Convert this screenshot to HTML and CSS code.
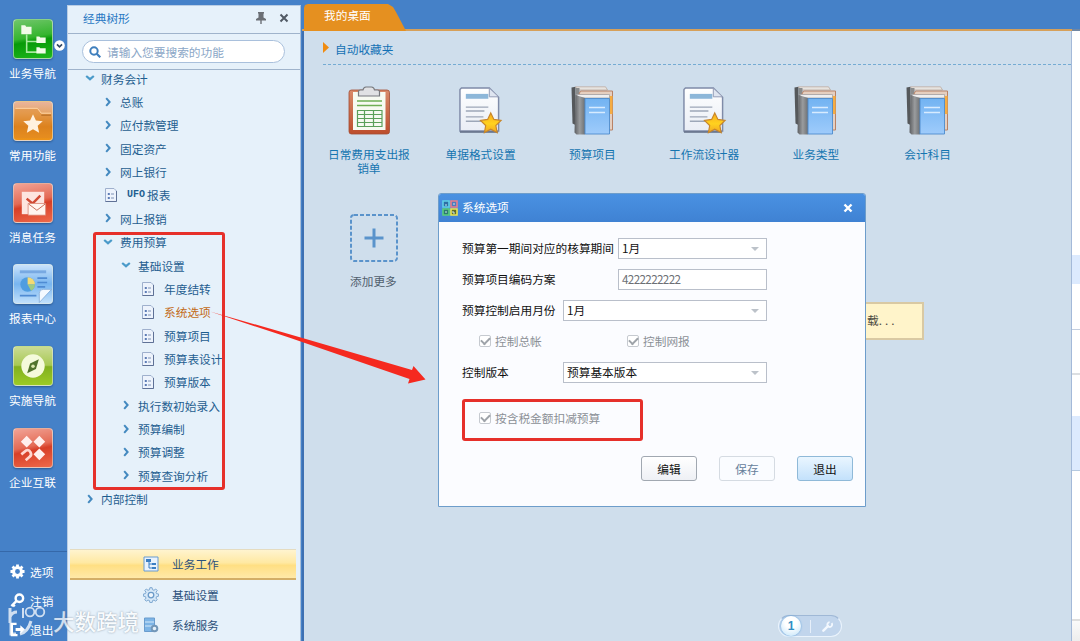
FILE: index.html
```html
<!DOCTYPE html>
<html lang="zh-CN">

<head>
<meta charset="UTF-8">
<meta name="viewport" content="width=device-width, initial-scale=1.0">
<title>我的桌面</title>
<link rel="stylesheet" href="styles.css">
</head>

<body>

<!-- Shared icons -->
<svg class="defs" width="0" height="0">
    <defs>
        <linearGradient id="gStar" x1="0" y1="0" x2="0" y2="1"><stop offset="0" stop-color="#f9ab1c"/><stop offset=".55" stop-color="#ffd21f"/><stop offset="1" stop-color="#f2a722"/></linearGradient>
        <linearGradient id="gPaper" x1="0" y1="0" x2="0" y2="1"><stop offset="0" stop-color="#fff"/><stop offset="1" stop-color="#e9edf5"/></linearGradient>
        <linearGradient id="gBook" x1="0" y1="0" x2="0" y2="1"><stop offset="0" stop-color="#72b3f2"/><stop offset="1" stop-color="#9ecbfb"/></linearGradient>
        <linearGradient id="gSpine" x1="0" y1="0" x2="1" y2="0"><stop offset="0" stop-color="#5d5f62"/><stop offset=".5" stop-color="#9a9c9e"/><stop offset="1" stop-color="#6d7073"/></linearGradient>
        <linearGradient id="gBoard" x1="0" y1="0" x2="0" y2="1"><stop offset="0" stop-color="#d88a6b"/><stop offset="1" stop-color="#bd4d2c"/></linearGradient>
    </defs>
    <symbol id="right" viewBox="0 0 10 10"><path d="M3.2 1.2 6.6 5 3.2 8.8" fill="none" stroke="#4389bf" stroke-width="2"/></symbol>
    <symbol id="down" viewBox="0 0 10 10"><path d="M1.2 3 5 6.2 8.8 3" fill="none" stroke="#4a9ac9" stroke-width="2.2"/></symbol>
    <symbol id="leaf" viewBox="0 0 12 14">
        <path d="M.5.5H9L11.5 3V13.500H.5Z" fill="#edf3fc" stroke="#9fb0cd"/>
        <path d="M11.500 3V13.500H.5" fill="none" stroke="#5f7196"/>
        <path d="M2.800 5h2v2h-2ZM2.800 9h2v2h-2Z" fill="#5d7cb5"/>
        <path d="M6 6h3M6 10h3" stroke="#7f92b5"/>
    </symbol>
    <symbol id="doc" viewBox="0 0 46 50">
        <path d="M3.500 1.500H32L41.500 11V45.500H2V3Z" fill="url(#gPaper)" stroke="#7f8ba8" stroke-width="1.500"/>
        <path d="M2 46.500H41" stroke="#5f6b85" stroke-width="1.500"/>
        <path d="M32 1.500V10.500H41.500Z" fill="#dfe5f0" stroke="#929cb5"/>
        <path d="M8 7.500H31V12.500H8Z" fill="#8db7d9"/>
        <path d="M8 21H31M8 25H27M8 31H26M8 35.500H24" stroke="#9da7b8" stroke-width="1.400"/>
        <path d="m33.500 27 3.200 6.600 7.300 1.100-5.300 5.100 1.300 7.300-6.500-3.500-6.500 3.500 1.300-7.300-5.300-5.100 7.300-1.100Z" fill="url(#gStar)" stroke="#c8862b" stroke-width="1.200"/>
    </symbol>
    <symbol id="books" viewBox="0 0 44 50">
        <path d="M1 1.500 5 .8V39l-3-1.500Z" fill="#55585b"/>
        <path d="M5 .8H35L37 4H7Z" fill="#e6e3e0" stroke="#b49a8b" stroke-width=".6"/>
        <path d="M5 2H9V42L5 40Z" fill="#8a8c8d"/>
        <path d="M10 5H42V44H38L37 9H8Z" fill="#e5cfc0" stroke="#b88266"/>
        <path d="M38.500 10H42V28H38.500Z" fill="#f6ad43"/>
        <path d="M6 8.500H39V12H8Z" fill="#eeeeef" stroke="#9d9ea2" stroke-width=".7"/>
        <path d="M5 9 14.500 12V48.500H6L4 46.500Z" fill="url(#gSpine)"/>
        <path d="M14.500 12.500H39V48H14.500Z" fill="url(#gBook)" stroke="#4c8bcd" stroke-width=".9"/>
        <path d="M18.500 21.500H34.500M18.500 26.500H34.500" stroke="#d7ebff" stroke-width="1.600"/>
    </symbol>
    <symbol id="gear" viewBox="0 0 16 16">
        <path d="M8 .5V4M8 12v3.500M.5 8H4M12 8h3.500M2.700 2.700 5 5M11 11l2.300 2.300M13.300 2.700 11 5M5 11l-2.300 2.300" stroke="currentColor" stroke-width="3"/>
        <circle cx="8" cy="8" r="4.200" fill="none" stroke="currentColor" stroke-width="3.200"/>
    </symbol>
</svg>

<div class="app">

    <!-- Left icon bar -->
    <div class="nav">
        <div class="nav-item">
            <div class="nav-icon green">
                <svg viewBox="0 0 39 39"><path d="M13 15V33H25M13 22H25" fill="none" stroke="#a9e9a0" stroke-width="1.600"/><path d="M7.500 5.500h4l1 1.500H18v7.500H7.500ZM23 17h3l1 1h5.500v5.500H23ZM23 28h3l1 1h5.500v5.500H23Z" fill="#f2fbe9"/></svg>
            </div>
            <span>业务导航</span>
            <svg class="nav-badge" viewBox="0 0 10 10"><circle cx="5" cy="5" r="4.800" fill="#fff"/><path d="M2.700 4 5 6.300 7.300 4" fill="none" stroke="#324863" stroke-width="1.500"/></svg>
        </div>
        <div class="nav-item">
            <div class="nav-icon orange">
                <svg viewBox="0 0 39 39"><path d="M1 8Q1 6.500 3 6.500H24L28 11.500H38V37H1Z" fill="#df8a28" opacity=".45"/><path d="M1.500 6.500H24L28 11.500H38" fill="none" stroke="#ffd7a8"/><path d="M28 13.500h10" stroke="#ad6520"/><path d="m19.500 12.500 3 6.500 7 .8-5.200 4.700 1.500 7-6.300-3.500-6.300 3.500 1.500-7-5.200-4.700 7-.8Z" fill="#fff1df"/></svg>
            </div>
            <span>常用功能</span>
        </div>
        <div class="nav-item">
            <div class="nav-icon red">
                <svg viewBox="0 0 39 39"><path d="M8 8H31V31H8Z" fill="#fde5df"/><path d="m13 15 6 5 8-8" fill="none" stroke="#d14a34" stroke-width="2.500"/><path d="M14.500 20H32.500V32H14.500Z" fill="#fff5ef" stroke="#d9826f" stroke-width=".8"/><path d="m15 20.500 8.500 6.500 8.500-6.500" fill="none" stroke="#c96d58"/></svg>
            </div>
            <span>消息任务</span>
        </div>
        <div class="nav-item">
            <div class="nav-icon blue">
                <svg viewBox="0 0 39 39"><path d="M6 7H33" stroke="#78a9e2" stroke-width="3"/><path d="M24 13.500H34M24 18H34M24 22.500H32M6 31.500H23" stroke="#4f8bd3" stroke-width="1.700"/><circle cx="14" cy="20" r="7.500" fill="#4f9de0"/><path d="M14 20V12.500A7.500 7.500 0 0 1 21.500 20Z" fill="#f4da73"/><path d="M14 20H21.500A7.500 7.500 0 0 1 17.500 26.500Z" fill="#9fcb82"/><path d="M26 38.500V29Q26 25 30 25H38.500Z" fill="#f3f9ff" stroke="#7fa9d6" stroke-width=".8"/></svg>
            </div>
            <span>报表中心</span>
        </div>
        <div class="nav-item">
            <div class="nav-icon lime">
                <svg viewBox="0 0 39 39"><circle cx="19.500" cy="19.500" r="12" fill="#f5fadb"/><path d="M25.500 12.500 22.500 22.500 13.500 27 16.500 17Z" fill="#51722c"/><circle cx="19.500" cy="19.700" r="1.800" fill="#dbe7ad"/></svg>
            </div>
            <span>实施导航</span>
        </div>
        <div class="nav-item">
            <div class="nav-icon red">
                <svg viewBox="0 0 39 39"><path d="m13 7 6 6-6 6-6-6ZM26 7l6 6-6 6-6-6ZM26 20l6 6-6 6-6-6Z" fill="#fff0ed"/><path d="m7.500 26 5-4q3-1 4.500 2t-1 4.500L12 32" fill="none" stroke="#ffd7cf" stroke-width="2.800"/></svg>
            </div>
            <span>企业互联</span>
        </div>

        <div class="nav-tools">
            <div class="tool"><svg viewBox="0 0 16 16"><use href="#gear"/></svg>选项</div>
            <div class="tool"><svg viewBox="0 0 16 16"><circle cx="10" cy="5.500" r="4" fill="none" stroke="currentColor" stroke-width="2.600"/><path d="M7 8.500 1.500 14M3 12l2 2.500" stroke="currentColor" stroke-width="2.600"/></svg>注销</div>
            <div class="tool"><svg viewBox="0 0 16 16"><path d="M7 2H2V14H8" fill="none" stroke="currentColor" stroke-width="2.400"/><path d="M6 6.500h5V3.500l5 4.500-5 4.500v-3H6Z" fill="currentColor"/></svg>退出</div>
        </div>
    </div>

    <!-- Function tree -->
    <div class="panel">
        <div class="panel-header">
            <span class="panel-title">经典树形</span>
            <svg class="pin" viewBox="0 0 12 12"><path d="M3 0H9V1.500H8.500V5.500L11 7V8.500H6.700V12H5.300V8.500H1V7L3.500 5.500V1.500H3Z" fill="#6b6f75"/></svg>
            <svg class="panel-close" viewBox="0 0 10 10"><path d="m1.500 1.500 7 7m0-7-7 7" stroke="#515a64" stroke-width="2"/></svg>
        </div>
        <div class="search-bar">
            <div class="search-box">
                <svg viewBox="0 0 12 12"><circle cx="5" cy="5" r="3.700" fill="none" stroke="#3f7fbd" stroke-width="2"/><path d="m7.700 7.700 3.600 3.600" stroke="#3f7fbd" stroke-width="2.200"/></svg>
                <span>请输入您要搜索的功能</span>
            </div>
        </div>

        <div class="tree">
            <div class="row lvl1"><svg><use href="#down"/></svg>财务会计</div>
            <div class="row lvl2"><svg><use href="#right"/></svg>总账</div>
            <div class="row lvl2"><svg><use href="#right"/></svg>应付款管理</div>
            <div class="row lvl2"><svg><use href="#right"/></svg>固定资产</div>
            <div class="row lvl2"><svg><use href="#right"/></svg>网上银行</div>
            <div class="row leaf2"><svg><use href="#leaf"/></svg><span class="latin">UFO</span>报表</div>
            <div class="row lvl2"><svg><use href="#right"/></svg>网上报销</div>
            <div class="row lvl2"><svg><use href="#down"/></svg>费用预算</div>
            <div class="row lvl3"><svg><use href="#down"/></svg>基础设置</div>
            <div class="row leaf4"><svg><use href="#leaf"/></svg>年度结转</div>
            <div class="row leaf4 active"><svg><use href="#leaf"/></svg>系统选项</div>
            <div class="row leaf4"><svg><use href="#leaf"/></svg>预算项目</div>
            <div class="row leaf4"><svg><use href="#leaf"/></svg>预算表设计</div>
            <div class="row leaf4"><svg><use href="#leaf"/></svg>预算版本</div>
            <div class="row lvl3"><svg><use href="#right"/></svg>执行数初始录入</div>
            <div class="row lvl3"><svg><use href="#right"/></svg>预算编制</div>
            <div class="row lvl3"><svg><use href="#right"/></svg>预算调整</div>
            <div class="row lvl3"><svg><use href="#right"/></svg>预算查询分析</div>
            <div class="row lvl1"><svg><use href="#right"/></svg>内部控制</div>
        </div>

        <div class="modules">
            <div class="module current"><svg viewBox="0 0 16 16"><path d="M1 1H15V15H1Z" fill="#e9f2fc" stroke="#699bd0"/><path d="M3 3H8V6H3ZM9 7h4v2H9ZM9 11h4v2H9Z" fill="#3b7fc4"/><path d="M6 6V12H9M6 8H9" fill="none" stroke="#3b7fc4"/></svg>业务工作</div>
            <div class="module"><svg viewBox="0 0 16 16"><path d="M6.900.7h2.200l.4 2 1.500.6L12.700 2l1.500 1.500L13 5.200l.6 1.500 2 .3v2.200l-2 .4-.6 1.500 1.200 1.600-1.500 1.500-1.700-1.200-1.500.6-.4 2H6.900l-.4-2L5 13l-1.700 1.200-1.500-1.500L3 11.100l-.6-1.500-2-.4V7l2-.4L3 5.200 1.800 3.500 3.300 2 5 3.300l1.500-.6Z" fill="#d6e8f8" stroke="#7da7d0"/><circle cx="8" cy="8.100" r="2.800" fill="#eef6fd" stroke="#6c9bc9" stroke-width="1.300"/></svg>基础设置</div>
            <div class="module"><svg viewBox="0 0 16 16"><path d="M1.500 1H11.500V14.500H1.500Z" fill="#7cb4e6" stroke="#6a9ccd"/><path d="M2 5H11M2 9H11" stroke="#d6eafa"/><circle cx="11.500" cy="11.500" r="2.800" fill="#e4f0fa" stroke="#7397b8" stroke-width="2"/></svg>系统服务</div>
        </div>
    </div>

    <!-- Desktop -->
    <div class="main">
        <div class="tabs"><div class="tab">我的桌面</div></div>
        <div class="desktop">
            <div class="section">
                <svg viewBox="0 0 6 11"><path d="M0 0 6 5.500 0 11Z" fill="#f08c12"/></svg>自动收藏夹
            </div>
            <div class="shortcuts">
                <div class="shortcut">
                    <svg viewBox="0 0 44 50">
                        <rect x="1.500" y="4" width="40.500" height="44" rx="2.500" fill="url(#gBoard)" stroke="#a24d33" stroke-width=".8"/>
                        <path d="M5.500 6H38V44H5.500Z" fill="#f7faf2"/>
                        <path d="M11 7.500V5.500q0-1.500 2-1.500h2.500q.5-3 3-3h5.500q2.500 0 3 3H30q2 0 2 1.500v4.500H11Z" fill="#e0e1e4" stroke="#77797e" stroke-width="1.200"/>
                        <path d="M9.500 15H34.500M9.500 19.500H34.500" stroke="#6fae55" stroke-width="1.400"/>
                        <path d="M10 24.500H34.500V40.500H10ZM10 28.500H34.500M10 32.500H34.500M10 36.500H34.500M17 24.500V40.500M26 24.500V40.500" fill="none" stroke="#5ca05a" stroke-width="1.200"/>
                    </svg>
                    <span>日常费用支出报销单</span>
                </div>
                <div class="shortcut"><svg><use href="#doc"/></svg><span>单据格式设置</span></div>
                <div class="shortcut"><svg><use href="#books"/></svg><span>预算项目</span></div>
                <div class="shortcut"><svg><use href="#doc"/></svg><span>工作流设计器</span></div>
                <div class="shortcut"><svg><use href="#books"/></svg><span>业务类型</span></div>
                <div class="shortcut"><svg><use href="#books"/></svg><span>会计科目</span></div>
            </div>
            <div class="add-more">
                <svg viewBox="0 0 48 48"><rect x="1" y="1" width="46" height="46" rx="3" fill="none" stroke="#5a93cb" stroke-width="2" stroke-dasharray="4 2"/><path d="M24 14.500V33.500M14.500 24H33.500" stroke="#5a93cb" stroke-width="3"/></svg>
                <span>添加更多</span>
            </div>
            <div class="pager">
                <span class="page">1</span>
                <span class="divider"></span>
                <svg viewBox="0 0 12 12"><path d="m1.500 10.500 5-5" stroke="#f3f8fe" stroke-width="2.600" stroke-linecap="round"/><path d="M10.500 2.300A2.600 2.600 0 1 1 8.300 1.300" fill="none" stroke="#f3f8fe" stroke-width="2"/></svg>
            </div>
        </div>
    </div>

    <div class="edge">
        <div class="edge-top"></div>
        <div class="edge-hl one"></div>
        <div class="edge-line one"></div>
        <div class="edge-line two"></div>
        <div class="edge-hl two"></div>
        <div class="edge-foot"></div>
    </div>
</div>

<div class="toast">载<span class="dots">...</span></div>

<!-- Options dialog -->
<div class="dialog">
    <div class="dialog-header">
        <svg class="dialog-logo" viewBox="0 0 16 16"><path d="M1 1H7V7H1Z" fill="#2c6fa5" stroke="#5fd0e6" stroke-width="1.600"/><path d="M9 1h6V7H9Z" fill="#4e7bbd" stroke="#e87f8c" stroke-width="1.600"/><path d="M1 9H7v6H1Z" fill="#2b7b71" stroke="#59d07b" stroke-width="1.600"/><path d="M9 9h6v6H9Z" fill="#5f6c28" stroke="#eee750" stroke-width="1.600"/><path d="M4 4V6M11 4h2M4 11v2M11 11v2h2" fill="none" stroke="#cdeaf0"/></svg>
        <span>系统选项</span>
        <svg class="dialog-close" viewBox="0 0 10 10"><path d="m1.500 1.500 7 7m0-7-7 7" stroke="#fff" stroke-width="2.400"/></svg>
    </div>
    <div class="dialog-body">
        <div class="field"><label>预算第一期间对应的核算期间</label><div class="select short">1月</div></div>
        <div class="field"><label>预算项目编码方案</label><div class="input short">4222222222</div></div>
        <div class="field"><label>预算控制启用月份</label><div class="select">1月</div></div>
        <div class="field checks">
            <div class="check"><i></i>控制总帐</div>
            <div class="check"><i></i>控制网报</div>
        </div>
        <div class="field"><label>控制版本</label><div class="select">预算基本版本</div></div>
        <div class="field checks last">
            <div class="check"><i></i>按含税金额扣减预算</div>
        </div>
        <div class="buttons">
            <button class="btn">编辑</button>
            <button class="btn disabled">保存</button>
            <button class="btn primary">退出</button>
        </div>
    </div>
</div>

<!-- Annotations -->
<div class="mark mark-tree"></div>
<div class="mark mark-check"></div>
<svg class="arrow" viewBox="0 0 220 80"><path d="M1 2.500 90 28 203 61 204.500 57 216.500 70.500 199 74.500 200.500 70 80 28.500Z" fill="#f5291f"/></svg>
<div class="watermark">
    <svg viewBox="0 0 40 32"><path d="M3 3V18M3 12q2-5 7-5M4 18v11h5M13 29q8-2 11-13" fill="none" stroke="#fff" stroke-width="3"/><path d="M16 3v10" stroke="#fff" stroke-width="2"/><circle cx="23" cy="7" r="4.300" fill="none" stroke="#fff" stroke-width="1.800"/><circle cx="33" cy="7" r="4.300" fill="none" stroke="#fff" stroke-width="1.800"/></svg>
    <span>大数跨境</span>
</div>

</body>

</html>
```

FILE: styles.css
```css
* {
    box-sizing: border-box;
}

body {
    margin: 0;
    width: 1080px;
    height: 641px;
    position: relative;
    overflow: hidden;
    font-family: "Noto Sans CJK SC", sans-serif;
    font-size: 11.7px;
    line-height: 16px;
    background-color: #4581c8;
}

svg {
    display: block;
    flex: none;
}

.defs {
    position: absolute;
}

.app {
    display: flex;
    height: 641px;
}

/* Left icon bar */
.nav {
    width: 67px;
    padding-top: 19px;
    display: flex;
    flex-direction: column;
    color: #fff;
}

.nav-item {
    position: relative;
    height: 81.8px;
    text-align: center;
    padding-right: 2px;
}

.nav-icon {
    width: 40px;
    height: 40px;
    margin: 0 auto 6px;
    border-radius: 4px;
    border: 1px solid rgba(225, 235, 225, 0.55);
    box-shadow: 0 1px 2px rgba(20, 50, 90, 0.5);
}

.green {
    background: linear-gradient(170deg, #71c66b 0%, #35b52f 45%, #079a08 55%, #1eb71c 100%);
}

.orange {
    background: linear-gradient(#e9b49b 0%, #e6a566 30%, #d97c16 65%, #ee9419 100%);
}

.red {
    background: linear-gradient(168deg, #f1a497 0%, #e46b55 45%, #d73f27 55%, #ef694a 100%);
}

.blue {
    background: linear-gradient(#c9e2fb, #78b5f0 50%, #c1e0fb);
}

.lime {
    background: linear-gradient(#cadb93 0%, #a8c953 48%, #82b01f 52%, #9ccb25 100%);
}

.nav-badge {
    position: absolute;
    left: 54px;
    top: 21px;
    width: 11px;
    height: 11px;
}

.nav-tools {
    margin-top: auto;
    height: 90px;
    padding-top: 5px;
    border-top: 1px solid #3568a9;
}

.tool {
    display: flex;
    align-items: center;
    gap: 5px;
    height: 29px;
    padding-left: 10px;
}

.tool svg {
    width: 15px;
    height: 15px;
}

/* Tree panel */
.panel {
    width: 234px;
    margin-top: 5px;
    display: flex;
    flex-direction: column;
    background-color: #e6f1fa;
    border-left: 1px solid #b9cde4;
    border-top: 1px solid #b9cde4;
    border-right: 1px solid #aabfd9;
    color: #1f5e90;
}

.panel-header {
    display: flex;
    align-items: center;
    height: 28px;
    padding: 0 11px 3px 15px;
    border-bottom: 1px solid #9fb3cb;
}

.panel-title {
    flex: 1;
    color: #2878c3;
}

.pin {
    width: 12px;
    height: 12px;
    margin-right: 12px;
}

.panel-close {
    width: 10px;
    height: 10px;
}

.search-bar {
    height: 36px;
    padding: 6px 15px 0 14px;
    border-bottom: 1px solid #9fb3cb;
}

.search-box {
    display: flex;
    align-items: center;
    height: 23px;
    gap: 6px;
    padding-left: 6px;
    border: 1px solid #a9c0dc;
    border-radius: 12px;
    background-color: #fff;
    color: #8ba7c7;
}

.search-box svg {
    width: 12px;
    height: 12px;
}

.tree {
    flex: 1;
    margin-top: -3px;
}

.row {
    display: flex;
    align-items: center;
    height: 23.36px;
    white-space: nowrap;
}

.row svg {
    width: 10px;
    height: 10px;
    margin-top: -1px;
}

.lvl1 {
    padding-left: 17px;
    gap: 6px;
}

.lvl2 {
    padding-left: 35px;
    gap: 7px;
}

.lvl3 {
    padding-left: 53px;
    gap: 7px;
}

.leaf2 {
    padding-left: 37px;
}

.leaf4 {
    padding-left: 74px;
}

.leaf2 svg,
.leaf4 svg {
    width: 12px;
    height: 14px;
    margin-top: 0;
    margin-right: 10px;
}

.latin {
    font-family: "Liberation Mono", monospace;
    font-size: 10px;
    font-weight: bold;
    margin-right: 2px;
}

.active {
    color: #c26a17;
}

.modules {
    height: 92px;
    padding: 0 4px 0 2px;
}

.module {
    display: flex;
    align-items: center;
    gap: 13px;
    height: 30px;
    padding-left: 73px;
    color: #2d527c;
}

.module svg {
    width: 16px;
    height: 16px;
}

.module.current {
    height: 31px;
    border-top: 1px solid #e5dcc0;
    border-bottom: 2px solid #d3ae67;
    background: linear-gradient(#fff4cf, #ffe9a3 45%, #ffdf83 55%, #ffe9a8);
}

/* Desktop */
.main {
    width: 771px;
    padding-left: 1px;
    display: flex;
    flex-direction: column;
}

.tabs {
    height: 31px;
    padding: 4px 0 0 2px;
    border-bottom: 2px solid #d6a05a;
}

.tab {
    width: 102px;
    height: 27px;
    padding: 3px 0 0 20px;
    color: #fff;
    background-color: #e59020;
    clip-path: polygon(0 4px, 1px 1px, 4px 0, 84px 0, 89px 3px, 92px 8px, 102px 27px, 0 27px);
}

.desktop {
    flex: 1;
    position: relative;
    background-color: #cfdeec;
    border-left: 2px solid #3e70b2;
    border-right: 1px solid #a3b9d9;
}

.section {
    display: flex;
    align-items: center;
    gap: 6px;
    height: 34px;
    margin-left: 19px;
    padding-top: 2px;
    border-bottom: 1px dashed #74abd3;
    color: #1371b5;
}

.section svg {
    width: 6px;
    height: 11px;
    margin-top: -2px;
}

.shortcuts {
    display: flex;
    padding: 21px 0 0 9px;
}

.shortcut {
    width: 111.75px;
    height: 126px;
    display: flex;
    flex-direction: column;
    align-items: center;
    text-align: center;
    line-height: 13.5px;
    color: #1575b0;
}

.shortcut svg {
    width: 45px;
    height: 50px;
}

.shortcut:first-child svg {
    margin-left: 2px;
}

.shortcut span {
    width: 83px;
    margin-top: 11px;
}

.add-more {
    width: 48px;
    margin: 2px 0 0 46px;
    color: #51606e;
    white-space: nowrap;
}

.add-more svg {
    width: 48px;
    height: 48px;
    margin-bottom: 11px;
}

.pager {
    position: absolute;
    left: 474px;
    bottom: 4px;
    width: 64px;
    height: 22px;
    display: flex;
    align-items: center;
    gap: 9px;
    padding-left: 2px;
    border: 1px solid #eaf3fc;
    border-top-color: #9fb8d6;
    border-radius: 11px;
    background-color: #c1d5ec;
}

.page {
    width: 20px;
    height: 20px;
    border-radius: 50%;
    background: radial-gradient(circle at 50% 30%, #fff 35%, #bfe3fa);
    box-shadow: 0 0 2px #4f9bda;
    font: bold 12px/20px "Liberation Sans", sans-serif;
    text-align: center;
    color: #318fc4;
}

.divider {
    width: 1px;
    height: 13px;
    background-color: #e6effa;
}

.pager svg {
    width: 11px;
    height: 11px;
    margin-left: 2px;
}

/* Window behind, seen at the right edge */
.edge {
    width: 8px;
    display: flex;
    flex-direction: column;
    background-color: #fff;
}

.edge-top {
    height: 31px;
    margin-bottom: 224px;
    background-color: #4581c8;
    border-bottom: 2px solid #7087a4;
}

.edge-hl {
    background-color: #dceafe;
}

.edge-hl.one {
    height: 29px;
}

.edge-hl.two {
    height: 55px;
    margin-top: 41px;
    border-bottom: 1px solid #b5c9e0;
}

.edge-line {
    height: 1px;
    background-color: #c3cedf;
}

.edge-line.one {
    margin-top: 45px;
}

.edge-line.two {
    height: 2px;
    margin-top: 43px;
    background-color: #dcdfe2;
}

.edge-foot {
    flex: 1;
    margin-top: 148px;
    border-top: 2px solid #dedede;
    background: linear-gradient(#fafafa, #ededed);
}

.toast {
    position: absolute;
    left: 840px;
    top: 302px;
    width: 84px;
    height: 38px;
    padding: 8px 0 0 25px;
    border: 2px solid #d9c9a3;
    background-color: #fff4ca;
    color: #4b4a42;
}

.dots {
    letter-spacing: 3px;
}

/* Dialog */
.dialog {
    position: absolute;
    left: 438px;
    top: 193px;
    width: 428px;
    height: 314px;
    border: 1px solid #6d9dcb;
    border-radius: 3px 3px 0 0;
    background-color: #fbfcff;
    color: #111;
}

.dialog-header {
    display: flex;
    align-items: center;
    height: 28px;
    padding: 0 12px 0 3px;
    border-radius: 2px 2px 0 0;
    background: linear-gradient(#4a91e2, #3f82d3);
    color: #fff;
}

.dialog-logo {
    width: 16px;
    height: 16px;
    margin-right: 4px;
}

.dialog-header span {
    flex: 1;
    padding-bottom: 2px;
}

.dialog-close {
    width: 10px;
    height: 10px;
    margin-top: -1px;
}

.dialog-body {
    padding: 11px 12px 0 23px;
}

.field {
    display: flex;
    align-items: center;
    justify-content: space-between;
    height: 31px;
    padding-right: 86px;
    white-space: nowrap;
}

.field label {
    padding-bottom: 1px;
}

.select,
.input {
    position: relative;
    width: 204px;
    height: 21px;
    padding: 0 0 0 3px;
    line-height: 18px;
    border: 1px solid #b9bfca;
    background-color: #fff;
}

.short {
    width: 149px;
}

.input {
    letter-spacing: -0.65px;
    color: #6d7075;
}

.select::after {
    content: "";
    position: absolute;
    right: 7px;
    top: 8px;
    border: 4px solid transparent;
    border-top-color: #bcc2c9;
    border-bottom: 0;
}

.checks {
    justify-content: flex-start;
    padding-left: 17px;
    padding-bottom: 2px;
    color: #8b9096;
}

.check {
    display: flex;
    flex: none;
    align-items: center;
    gap: 4px;
    width: 148px;
}

.check i {
    width: 12px;
    height: 12px;
    border: 1px solid #c6cad0;
    border-radius: 2px;
    background-color: #fff;
}

.check i::after {
    content: "";
    display: block;
    width: 7px;
    height: 4px;
    margin: 1px 0 0 1px;
    border-left: 2px solid #9ea3a9;
    border-bottom: 2px solid #9ea3a9;
    transform: rotate(-45deg);
}

.last {
    margin-top: 15px;
}

.buttons {
    display: flex;
    justify-content: flex-end;
    gap: 22px;
    margin-top: 22px;
}

.btn {
    width: 56px;
    height: 25px;
    padding: 0 0 1px;
    border: 1px solid #a1a8b1;
    border-radius: 3px;
    background: linear-gradient(#fff, #eef0f5);
    font-family: inherit;
    font-size: 11.7px;
    color: #111;
}

.btn.disabled {
    border-color: #d5dbe2;
    background: #fafcff;
    color: #66809b;
}

.btn.primary {
    border-color: #8fb9d8;
    background: linear-gradient(#eaf6ff, #c3e1fb);
}

/* Annotations */
.mark {
    position: absolute;
    border: 3px solid #e6302a;
    border-radius: 3px;
}

.mark-tree {
    left: 93px;
    top: 232px;
    width: 132px;
    height: 258px;
}

.mark-check {
    left: 462px;
    top: 399px;
    width: 181px;
    height: 42px;
}

.arrow {
    position: absolute;
    left: 209px;
    top: 309px;
    width: 220px;
    height: 80px;
}

.watermark {
    position: absolute;
    left: 7px;
    top: 605px;
    display: flex;
    align-items: center;
    gap: 6px;
    font-size: 21.5px;
    font-weight: 500;
    line-height: 32px;
    color: #fff;
    opacity: 0.75;
    text-shadow: 0 0 2px #66788c;
}

.watermark svg {
    width: 40px;
    height: 32px;
}
```
